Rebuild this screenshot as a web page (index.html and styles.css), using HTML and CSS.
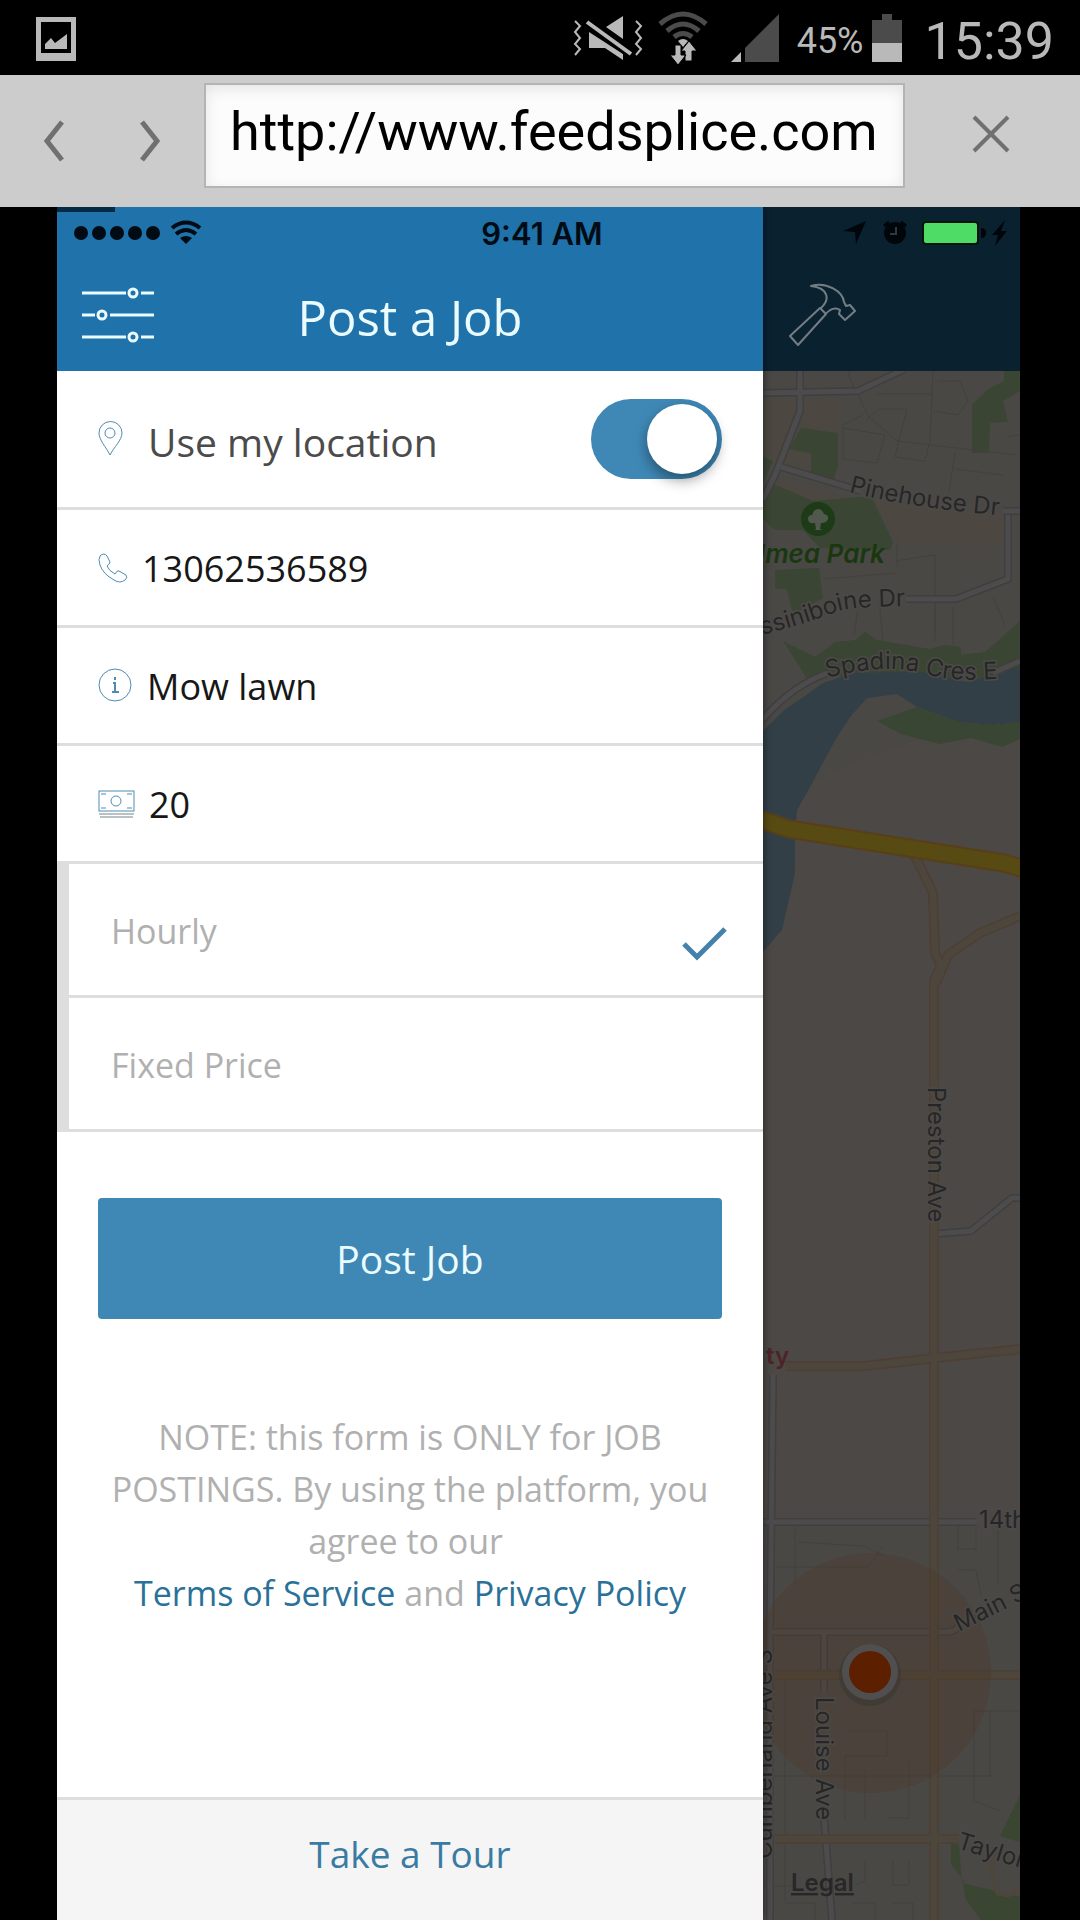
FILE: index.html
```html
<!DOCTYPE html>
<html lang="en">
<head>
<meta charset="utf-8">
<title>Post a Job</title>
<meta name="viewport" content="width=device-width, initial-scale=1">
<link rel="stylesheet" href="styles.css">
</head>
<body>
<div class="system-bar">
  <svg class="shot-icon" width="40" height="46" viewBox="0 0 40 46" aria-hidden="true">
    <path fill="#b9b9b9" fill-rule="evenodd" d="M0 2h40v44H0zM5 7v31h30V7z"/>
    <path fill="#b9b9b9" d="M9 34v-5l6-6 4 5 12-9v15z"/>
  </svg>
  <svg width="70" height="46" viewBox="0 0 70 46" aria-hidden="true">
    <path fill="none" stroke="#b9b9b9" stroke-width="2" d="M2 6l5 5-5 6 5 6-5 6 5 5-5 6M63 6l5 5-5 6 5 6-5 6 5 5-5 6"/>
    <path fill="#b9b9b9" d="M50 1v23L33 12zM16 17l34 22v6L32 33H16z"/>
    <path stroke="#000" stroke-width="9" d="M14 7l44 32"/>
    <path stroke="#b9b9b9" stroke-width="4" d="M14 7l44 32"/>
  </svg>
  <svg class="wifi" width="50" height="54" viewBox="0 0 50 54" aria-hidden="true">
    <path fill="none" stroke="#4b4b4b" stroke-width="5" d="M2 13q23-20 46 0M9 20q16-14 32 0M16 26q9-7 18 0"/>
    <path fill="#b9b9b9" d="M20 30q5-4 10 0l-5 6z"/>
    <path fill="#b9b9b9" stroke="#000" d="M17 34h6v10h5l-8 10-8-10h5zM33 50h-6V40h-4l8-10 8 10h-5v10z"/>
  </svg>
  <svg class="signal" width="48" height="50" viewBox="0 0 48 50" aria-hidden="true">
    <path fill="#b9b9b9" d="M0 49l10-10v10z"/>
    <path fill="#4b4b4b" d="M14 49V35L48 1v48z"/>
  </svg>
  <span class="charge">45%</span>
  <svg class="cell" width="30" height="48" viewBox="0 0 30 48" aria-hidden="true">
    <path fill="#4b4b4b" d="M10 0h10v6h10v23H0V6h10z"/>
    <path fill="#b9b9b9" d="M0 29h30v19H0z"/>
  </svg>
  <span class="clock">15:39</span>
</div>

<div class="browser-bar">
  <button class="nav" type="button" aria-label="Back"><svg width="22" height="42" viewBox="0 0 22 42"><path d="M19 2L4 21l15 19"/></svg></button>
  <button class="nav" type="button" aria-label="Forward"><svg width="22" height="42" viewBox="0 0 22 42"><path d="M3 2l15 19L3 40"/></svg></button>
  <input class="url" type="text" aria-label="Address" value="http://www.feedsplice.com">
  <button class="close" type="button" aria-label="Close"><svg width="38" height="38" viewBox="0 0 38 38"><path d="M2 2l34 34M36 2L2 36"/></svg></button>
</div>

<main class="app">
  <div class="ios-bar">
    <svg width="134" height="26" viewBox="0 0 134 26" aria-hidden="true">
      <g fill="#000b14"><circle cx="8" cy="13" r="7"/><circle cx="26" cy="13" r="7"/><circle cx="44" cy="13" r="7"/><circle cx="62" cy="13" r="7"/><circle cx="80" cy="13" r="7"/><path d="M107 18q6-4 12 0l-6 6z"/></g>
      <path fill="none" stroke="#000b14" stroke-width="4" d="M99 8q14-11 28 0M103 14q10-8 20 0"/>
    </svg>
    <span class="ios-time">9:41 AM</span>
    <svg class="ios-right" width="168" height="28" viewBox="0 0 168 28" aria-hidden="true">
      <path fill="#00060a" d="M0 12L23 2 13 25l-1-12z"/>
      <circle cx="52" cy="14" r="11" fill="#00060a"/>
      <path fill="none" stroke="#00060a" stroke-width="3" d="M41 7l5-4M58 3l5 4"/>
      <path fill="none" stroke="#2b3b45" stroke-width="2" d="M53 8v7h-6"/>
      <rect x="79" y="2" width="57" height="24" rx="4" fill="#03150c"/>
      <rect x="81" y="4" width="53" height="20" rx="2" fill="#4fdc66"/>
      <path fill="#00060a" d="M138 9q5 0 5 5t-5 5zM162 1l-13 15h6l-3 11 12-15h-6z"/>
    </svg>
  </div>

  <section class="drawer">
    <header class="drawer-head">
      <button class="filters" type="button" aria-label="Filters">
        <svg width="74" height="56" viewBox="0 0 74 56" fill="none" stroke="#eafcff" stroke-width="3">
          <path d="M1 6h44M60 6h13M1 28h13M29 28h44M1 50h44M60 50h13"/>
          <circle cx="52" cy="6" r="4"/><circle cx="21" cy="28" r="4"/><circle cx="52" cy="50" r="4"/>
        </svg>
      </button>
      <h1>Post a Job</h1>
    </header>
    <form class="job-form">
      <div class="row row-tall">
        <svg width="25" height="36" viewBox="0 0 25 36"><path d="M12 34C8 26 1 19 1 12a11 11 0 0 1 23 0c0 7-8 14-12 22z"/><circle cx="12" cy="12" r="5"/></svg>
        <label class="location-label" for="use-location">Use my location</label>
        <input class="switch" id="use-location" type="checkbox" role="switch" checked>
      </div>
      <div class="row">
        <svg width="30" height="30" viewBox="0 0 30 30"><path d="M2 3q4-4 7 0l3 6q0 2-3 4 2 5 8 8 2-4 4-3l7 4q2 3-1 5-5 4-11 0Q5 21 2 12q-2-6 0-9z"/></svg>
        <input class="field" type="tel" aria-label="Phone" value="13062536589">
      </div>
      <div class="row">
        <svg width="35" height="35" viewBox="0 0 35 35"><circle cx="17" cy="17" r="16"/><path d="M17 9v3M15 15h2v9M14 24h7" stroke-width="2"/></svg>
        <input class="field" type="text" aria-label="Job description" value="Mow lawn">
      </div>
      <div class="row">
        <svg width="37" height="28" viewBox="0 0 37 28"><rect x="1" y="1" width="35" height="20"/><circle cx="18" cy="11" r="5"/><path d="M3 4h5M29 4h5M3 18h5M29 18h5"/><path d="M1 24h35M2 27h33" stroke="#74848c"/></svg>
        <input class="field" type="text" aria-label="Price" value="20">
      </div>
      <fieldset class="rates">
        <label class="rate"><span>Hourly</span><input type="radio" name="rate" checked><svg class="tick" width="48" height="38" viewBox="0 0 48 38"><path d="M3 19l13 13L44 4"/></svg></label>
        <label class="rate"><span>Fixed Price</span><input type="radio" name="rate"><svg class="tick" width="48" height="38" viewBox="0 0 48 38"><path d="M3 19l13 13L44 4"/></svg></label>
      </fieldset>
      <button class="submit" type="submit">Post Job</button>
      <p class="note">NOTE: this form is ONLY for JOB POSTINGS. By using the platform, you agree to our&nbsp;<br><a href="#terms">Terms of Service</a> and <a href="#privacy">Privacy Policy</a></p>
    </form>
    <a class="tour" href="#tour">Take a Tour</a>
  </section>

  <section class="behind">
    <header class="behind-head">
      <svg width="68" height="64" viewBox="0 0 68 64" fill="none" stroke="#737d83" stroke-width="2" stroke-linejoin="round">
        <path d="M2 53L32 25l6 6L10 62zM33 25c9-8 8-20-10-22 16-5 32 6 33 16l2 4 4-1 5 6-10 9-6-6 1-4c-4-3-10-2-16 6"/>
      </svg>
    </header>
    <svg class="map" viewBox="0 0 257 1549" preserveAspectRatio="xMidYMin slice" role="img" aria-label="Map">
      <rect width="257" height="1549" fill="#4c4845"/>
      <path fill="#4a4845" d="M0 0h257v330L70 400 0 440zM0 1154h257v395H0z"/>
      <path fill="#4c4740" d="M0 28h34l2 14-24 52-12-8zM40 28h36v32l-38-4zM28 80l17 2v22l-28-8zM110 130l130 14v32l-104-5zM14 108l74 20-30 4-40-14z"/>
      <g fill="#3a4534">
        <path d="M38 57l37 5v32l-5 18-22-8V82l-22-4zM0 86l10 4-10 22zM8 112l42 18 58-5 22 46-3 8-70-2-17-18H12L0 148v-28z"/>
        <path d="M12 199l44-2 4 30-30 16-6-25H12zM257 0v20l-17 10 5 21-18 1-1 30h-17V34l16-16 16-8V0z"/>
        <path d="M20 270l32 16 20-15 20-2 10-8 12 8 30 5 22 4 16-4 16 2v8l24-3 35-31v53l-60 6-140-4-12 4z"/>
      </g>
      <path fill="#323f47" d="M0 360l20-20 40-28 30-10 67-1 47 10 53-15v55l-27 3-33-3-43-15-20-13-30 4-17 19-13 20-17 31-10 19-13 23-2 27v36l-13 57-19 22z"/>
      <path fill="#394634" d="M114 350l40-14 43 15 33 3 27-3v17l-18 8-31-9-32 6-38-10z"/>
      <g fill="none" stroke="#43413f" stroke-width="1">
        <path d="M86 0v6l20 40 28 24 120 14M170 0l-3 70-5 20-30-4 12-48h-28l-12 10M80 54l20-10M80 54v34l34 4 8-28-42-7M192 82l-6 40M192 98l48 6M244 66l13-2M114 23h55M175 10h22l8 20-10 14-24-4M134 172v24M132 190l40-6v80M60 208l72-6M172 270v-40M190 236v38M230 225l12 30M95 235l-4 30M116 230l4 40"/>
        <path d="M32 1154v60M14 1196h90l16-20M35 1171l66 4 20 10M195 1154v24h18v-24M235 1154v60M195 1199h18l5 25M22 1300v230M84 1360h40v25h-42v64M102 1400v48M124 1447h22v-60M0 1405h230M211 1340h46M211 1340v90l26 10M227 1340v65M0 1515h30M102 1490v20l-10 4M130 1490v24h16v-24M22 1532h30v17M90 1532h22v17M130 1532h20v17"/>
      </g>
      <g fill="none" stroke-linejoin="round">
        <g stroke="#403e3e" stroke-width="8"><path d="M0 22l95-2L142-2M37 0v40L12 104 0 128M18 96l80 24M240 140h17M245 144v64l-52 20h-50M0 348q30-34 65-46M230 302l27-12M171 863l37-3 41-33h8M10 1004l-3 260v285M0 1151h213M6 1261h176q10 0 14-6M61 1261v60M61 1446l8 103"/></g>
        <g stroke="#4d4c4d" stroke-width="5"><path d="M0 22l95-2L142-2M37 0v40L12 104 0 128M18 96l80 24M240 140h17M245 144v64l-52 20h-50M0 348q30-34 65-46M230 302l27-12M171 863l37-3 41-33h8M10 1004l-3 260v285M0 1151h213M6 1261h176q10 0 14-6M61 1261v60M61 1446l8 103"/></g>
        <g stroke="#4f3e34" stroke-width="10"><path d="M151 483l19 39 2 60 6 12-7 16v939M257 545l-40 17-32 22-12 28M22 995h80l70-8 85-9M12 1304h245M12 1468h184"/></g>
        <g stroke="#4c463c" stroke-width="7"><path d="M151 483l19 39 2 60 6 12-7 16v939M257 545l-40 17-32 22-12 28M22 995h80l70-8 85-9M12 1304h245M12 1468h184"/></g>
        <path stroke="#574018" stroke-width="19" d="M-4 448l30 10 215 34 20 6"/>
        <path stroke="#574a12" stroke-width="15" d="M-4 448l30 10 215 34 20 6"/>
      </g>
      <path fill="#3a4532" d="M257 1424v47l-20-6zM188 1472l8 2 3 38 58 14v23h-39l-16-22-2-18-12-16z"/>
      <path fill="none" stroke="#4c463c" stroke-width="5" d="M257 1518l-12 6-10-2-8-28 6-6"/>
      <circle cx="108" cy="1302" r="120" fill="#4a3a28" fill-opacity=".35"/>
      <circle cx="107" cy="1304" r="31" fill="#353130" opacity=".4"/>
      <circle cx="107" cy="1301" r="28" fill="#504e4e"/>
      <circle cx="107" cy="1301" r="21" fill="#5c1f00"/>
      <circle cx="55" cy="148" r="17" fill="#1d3b17"/>
      <path fill="#51584d" d="M53 158l-1-6q-7 1-7-4 0-4 4-4 2-6 6-6t6 5q5 1 4 5t-7 4l-1 6 3 1h-9z"/>
      <defs>
        <path id="pinehouse" d="M86 121Q150 138 256 146"/>
        <path id="assiniboine" d="M-17 268Q40 254 76 240 96 234 190 235"/>
        <path id="spadina" d="M64 307Q120 292 160 302 190 313 256 306"/>
        <path id="main-st" d="M196 1261L286 1216"/>
        <path id="taylor" d="M193 1477L300 1510"/>
      </defs>
      <g class="street">
        <text><textPath href="#pinehouse">Pinehouse Dr</textPath></text>
        <text><textPath href="#assiniboine">Assiniboine Dr</textPath></text>
        <text><textPath href="#spadina">Spadina Cres E</textPath></text>
        <text transform="translate(165 716) rotate(90)">Preston Ave</text>
        <text x="216" y="1157">14th St</text>
        <text><textPath href="#main-st">Main St</textPath></text>
        <text transform="translate(53 1326) rotate(90)">Louise Ave</text>
        <text transform="translate(9 1488) rotate(-90)">Cumberland Ave S</text>
        <text><textPath href="#taylor">Taylor St</textPath></text>
      </g>
      <text class="park" x="-17" y="192">Umea Park</text>
      <text class="city" x="3" y="993">ty</text>
      <text class="legal" x="28" y="1520">Legal</text>
    </svg>
  </section>
</main>
</body>
</html>
```
FILE: styles.css
```css
* {
  box-sizing: border-box;
}

html,
body {
  margin: 0;
  min-height: 100%;
}

body {
  display: flex;
  flex-direction: column;
  min-height: 100vh;
  background: #000;
  font-family: "Open Sans", "Noto Sans", sans-serif;
}

button,
input {
  margin: 0;
  padding: 0;
  border: 0;
  background: none;
  font: inherit;
  color: inherit;
}

svg {
  display: block;
  flex: none;
}

/* Phone status bar */
.system-bar {
  display: flex;
  align-items: center;
  height: 75px;
  padding: 0 26px 0 36px;
  color: #b9b9b9;
  font-family: Roboto, sans-serif;
}

.shot-icon {
  margin-right: auto;
}

.wifi {
  margin: 0 23px 0 15px;
}

.charge {
  margin: 6px 8px 0 18px;
  font-size: 36px;
}

.clock {
  margin: 8px 0 0 23px;
  font-size: 52px;
}

/* Browser bar */
.browser-bar {
  display: flex;
  align-items: flex-start;
  height: 132px;
  padding: 8px 51px 0 24px;
  background: #ccc;
}

.browser-bar svg {
  margin: auto;
  fill: none;
  stroke: #707070;
  stroke-width: 5;
}

.nav {
  width: 60px;
  height: 104px;
  padding-top: 12px;
  margin-right: 36px;
}

.nav + .nav {
  margin-right: 24px;
}

.url {
  flex: 1;
  min-width: 0;
  height: 105px;
  padding: 0 24px 8px;
  border: 2px solid #b4b4b4;
  background: #fcfcfc;
  box-shadow: inset 0 4px 14px #e4e4e4;
  color: #000;
  font-family: Roboto, sans-serif;
  font-size: 54px;
}

.close {
  width: 76px;
  height: 102px;
  margin-left: 48px;
}

.close svg {
  stroke-width: 4;
}

/* App */
.app {
  flex: 1;
  display: grid;
  grid-template-columns: 706fr 257fr;
  grid-template-rows: 52px 1fr;
  margin: 0 60px 0 57px;
}

.ios-bar {
  z-index: 2;
  grid-area: 1 / 1 / 2 / 3;
  display: grid;
  grid-template-columns: 1fr auto 1fr;
  align-items: center;
  padding: 0 9px 0 16px;
}

.ios-time {
  color: #000b14;
  font-family: Inter, sans-serif;
  font-size: 31px;
  font-weight: 600;
}

.ios-right {
  justify-self: end;
}

.drawer {
  z-index: 1;
  grid-area: 1 / 1 / 3 / 2;
  display: flex;
  flex-direction: column;
  background: #fff;
  box-shadow: 0 0 8px rgba(0, 0, 0, 0.5);
  clip-path: inset(0 -10px 0 0);
}

.drawer-head {
  display: grid;
  grid-template-columns: 74px 1fr 74px;
  align-items: center;
  height: 164px;
  padding: 52px 24px 0;
  background: linear-gradient(#052a45, #052a45) 0 0 / 58px 5px no-repeat #1f72aa;
  color: #eafcff;
}

.drawer-head h1 {
  margin: 4px 0 0;
  font-size: 49px;
  font-weight: 400;
  line-height: 64px;
  text-align: center;
}

.job-form {
  flex: 1;
}

.row {
  display: flex;
  align-items: center;
  gap: 14px;
  height: 118px;
  padding: 0 41px;
  border-bottom: 3px solid #dedede;
}

.row svg {
  fill: none;
  stroke: #4f8bb2;
  stroke-width: 1;
}

.row-tall {
  height: 139px;
  gap: 25px;
}

.location-label {
  flex: 1;
  padding-top: 4px;
  color: #4b4b4b;
  font-size: 39px;
}

.switch {
  appearance: none;
  display: flex;
  align-items: center;
  width: 131px;
  height: 80px;
  padding: 5px;
  border-radius: 40px;
  background: #3f88b6;
}

.switch::before {
  content: "";
  width: 70px;
  height: 70px;
  border-radius: 50%;
  background: #fff;
  box-shadow: 0 6px 14px rgba(0, 0, 0, 0.4);
}

.switch:checked {
  justify-content: flex-end;
}

.field {
  flex: 1;
  min-width: 0;
  padding-top: 2px;
  color: #171717;
  font-size: 36px;
}

.rates {
  margin: 0;
  padding: 0;
  border: 0;
  border-left: 12px solid #dedede;
}

.rate {
  position: relative;
  display: flex;
  align-items: center;
  justify-content: space-between;
  height: 134px;
  padding: 3px 34px 0 42px;
  border-bottom: 3px solid #dedede;
  color: #b0b0b0;
  font-size: 34px;
}

.rate input {
  position: absolute;
  opacity: 0;
}

.tick {
  visibility: hidden;
  margin-top: 26px;
  fill: none;
  stroke: #4582ab;
  stroke-width: 5;
}

.rate input:checked + .tick {
  visibility: visible;
}

.submit {
  display: block;
  width: calc(100% - 82px);
  height: 121px;
  margin: 66px 41px 0;
  border-radius: 4px;
  background: #3f88b6;
  color: #eafcff;
  font-size: 39px;
}

.note {
  margin: 92px 41px 40px;
  color: #b0b0b0;
  font-size: 34px;
  line-height: 52px;
  text-align: center;
}

.note a {
  color: #2a7199;
  text-decoration: none;
}

.tour {
  display: flex;
  align-items: center;
  justify-content: center;
  height: 123px;
  padding-bottom: 13px;
  border-top: 3px solid #dedede;
  background: #f5f5f5;
  color: #3a7ba4;
  font-size: 37px;
  text-decoration: none;
}

/* Dimmed map screen */
.behind {
  grid-area: 1 / 2 / 3 / 3;
  display: flex;
  flex-direction: column;
  min-width: 0;
  background: #4a4845;
}

.behind-head {
  height: 164px;
  padding: 76px 25px 0;
  background: #0a2130;
}

.map {
  width: 100%;
  flex: 1 1 0;
  min-height: 0;
}

.map text {
  font-family: Inter, sans-serif;
}

.street {
  fill: #272626;
  font-size: 24px;
}

.street text {
  paint-order: stroke;
  stroke: #4c4a48;
  stroke-width: 3px;
}

.map .park {
  fill: #19380f;
  font-size: 26px;
  font-style: italic;
  font-weight: 600;
}

.map .city {
  fill: #4c2427;
  font-size: 24px;
  font-weight: 600;
}

.map .legal {
  fill: #282727;
  font-size: 24px;
  font-weight: 600;
  text-decoration: underline;
}
```
